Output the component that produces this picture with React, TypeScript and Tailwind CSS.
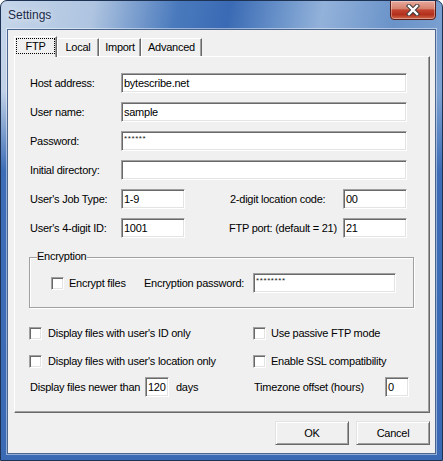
import React from "react";

const sunken =
  "bg-white border border-t-[#a0a0a0] border-l-[#a0a0a0] border-r-white border-b-white shadow-[inset_1px_1px_0_#696969,inset_-1px_-1px_0_#e3e3e3]";

function Field({ className, value = "" }: { className: string; value?: string }) {
  return (
    <div
      className={`${className} h-[20px] shrink-0 ${sunken} pl-[2px] flex items-center overflow-hidden whitespace-nowrap`}
    >
      {value}
    </div>
  );
}

function Stars({ className, count }: { className: string; count: number }) {
  return (
    <div className={`${className} h-[20px] shrink-0 ${sunken} pl-[2px] overflow-hidden whitespace-nowrap`}>
      <span className="block mt-[3px] text-[8px] leading-[8px] tracking-[0.6px] text-[#222]">{"*".repeat(count)}</span>
    </div>
  );
}

function Check() {
  return <div className={`w-[13px] h-[13px] shrink-0 ${sunken}`} />;
}

function Row({ label, children }: { label: string; children: React.ReactNode }) {
  return (
    <div className="flex items-center h-[20px]">
      <span className="w-[91px] shrink-0 whitespace-nowrap">{label}</span>
      {children}
    </div>
  );
}

function Button({ label }: { label: string }) {
  return (
    <div className="w-[74px] h-[24px] flex items-center justify-center bg-[#f0f0f0] border border-t-[#e3e3e3] border-l-[#e3e3e3] border-r-[#696969] border-b-[#696969] shadow-[inset_1px_1px_0_#fff,inset_-1px_-1px_0_#a0a0a0]">
      {label}
    </div>
  );
}

export default function App() {
  return (
    <div className="w-[443px] h-[461px] border border-[#1e3353] rounded-t-[7px] overflow-hidden bg-[linear-gradient(to_bottom,rgba(61,109,182,0)_0px,rgba(61,109,182,0)_90px,#3d6db6_170px,#3a6ab4_100%),linear-gradient(100deg,#c6d6ea_0%,#aec4e0_18%,#4a7abd_34%,#3a6ab4_44%,#6a93ca_54%,#93b2da_62%,#6a93c9_76%,#7fa3d2_88%,#b3c8e4_100%)] font-['Liberation_Sans',Arial,sans-serif] text-[11px] tracking-[-0.25px] text-black">
      <div className="flex h-[28px]">
        <span className="self-center pl-[7px] text-[12px] tracking-normal text-[#1b2a48] [text-shadow:0_0_6px_rgba(255,255,255,0.9)]">
          Settings
        </span>
        <div className="ml-auto mr-[6px] -mt-[1px] w-[46px] h-[20px] rounded-b-[4px] border border-[#5a1c14] bg-[linear-gradient(to_bottom,#e8aa9c_0%,#d7816f_42%,#c24530_50%,#b3301d_75%,#d0674a_100%)] shadow-[inset_0_0_0_1px_rgba(255,255,255,0.35)] flex items-center justify-center">
          <svg width="14" height="12" viewBox="0 0 14 12">
            <path d="M3 2 L11 10 M11 2 L3 10" stroke="#3b3b3b" strokeWidth="4.4" strokeLinecap="square" />
            <path d="M3 2 L11 10 M11 2 L3 10" stroke="#ffffff" strokeWidth="2.4" strokeLinecap="square" />
          </svg>
        </div>
      </div>

      <div className="ml-[6px] w-[429px] h-[425px] border border-[#4a6690] shadow-[0_0_0_1px_rgba(255,255,255,0.45)] bg-[#f0f0f0] pl-[6px] pt-[6px]">
        {/* Tabs */}
        <div className="flex items-end h-[20px]">
          <div className="relative z-10 -mb-[1px] w-[43px] h-[21px] bg-[#f0f0f0] border-l border-t border-r border-l-white border-t-white border-r-[#696969] shadow-[inset_-1px_0_0_#a0a0a0] pt-[1px] pl-[1px] pr-[1px]">
            <div className="h-[16px] border border-dotted border-black flex items-center justify-center">FTP</div>
          </div>
          <div className="w-[42px] h-[18px] border-l border-t border-r border-l-white border-t-white border-r-[#696969] shadow-[inset_-1px_0_0_#a0a0a0] flex items-center justify-center">
            Local
          </div>
          <div className="w-[42px] h-[18px] border-l border-t border-r border-l-white border-t-white border-r-[#696969] shadow-[inset_-1px_0_0_#a0a0a0] flex items-center justify-center">
            Import
          </div>
          <div className="w-[61px] h-[18px] border-l border-t border-r border-l-white border-t-white border-r-[#696969] shadow-[inset_-1px_0_0_#a0a0a0] flex items-center justify-center">
            Advanced
          </div>
        </div>

        {/* Panel */}
        <div className="w-[416px] h-[357px] border border-t-white border-l-white border-r-[#696969] border-b-[#696969] shadow-[inset_-1px_-1px_0_#a0a0a0] pl-[15px] pt-[16px]">
          <div className="flex flex-col gap-[9px]">
            <Row label="Host address:">
              <Field className="w-[286px]" value="bytescribe.net" />
            </Row>
            <Row label="User name:">
              <Field className="w-[286px]" value="sample" />
            </Row>
            <Row label="Password:">
              <Stars className="w-[286px]" count={6} />
            </Row>
            <Row label="Initial directory:">
              <Field className="w-[286px]" />
            </Row>
            <Row label="User's Job Type:">
              <Field className="w-[64px]" value="1-9" />
              <span className="ml-[45px] w-[113px] shrink-0 whitespace-nowrap">2-digit location code:</span>
              <Field className="w-[64px]" value="00" />
            </Row>
            <Row label="User's 4-digit ID:">
              <Field className="w-[64px]" value="1001" />
              <span className="ml-[44px] w-[114px] shrink-0 whitespace-nowrap">FTP port: (default = 21)</span>
              <Field className="w-[64px]" value="21" />
            </Row>
          </div>

          {/* Encryption group */}
          <div className="relative mt-[19px] -ml-[1px] w-[385px] h-[51px] border border-[#a0a0a0] shadow-[1px_1px_0_#fff,inset_1px_1px_0_#fff]">
            <span className="absolute left-[7px] top-[-8px] leading-[13px] bg-[#f0f0f0] pr-[1px]">Encryption</span>
            <div className="flex items-center h-[20px] mt-[15px] ml-[21px]">
              <Check />
              <span className="ml-[5px] w-[75px] shrink-0 whitespace-nowrap">Encrypt files</span>
              <span className="w-[109px] shrink-0 whitespace-nowrap">Encryption password:</span>
              <Stars className="w-[143px]" count={8} />
            </div>
          </div>

          {/* Options */}
          <div className="mt-[15px] -ml-[1px] flex items-center h-[20px]">
            <div className="w-[224px] shrink-0 flex items-center">
              <Check />
              <span className="ml-[6px] whitespace-nowrap">Display files with user's ID only</span>
            </div>
            <div className="flex items-center">
              <Check />
              <span className="ml-[5px] whitespace-nowrap">Use passive FTP mode</span>
            </div>
          </div>
          <div className="mt-[8px] -ml-[1px] flex items-center h-[20px]">
            <div className="w-[224px] shrink-0 flex items-center">
              <Check />
              <span className="ml-[6px] whitespace-nowrap">Display files with user's location only</span>
            </div>
            <div className="flex items-center">
              <Check />
              <span className="ml-[5px] whitespace-nowrap">Enable SSL compatibility</span>
            </div>
          </div>
          <div className="mt-[6px] -ml-[1px] flex items-center h-[20px]">
            <div className="w-[224px] shrink-0 flex items-center pl-[1px]">
              <span className="w-[115px] shrink-0 whitespace-nowrap">Display files newer than</span>
              <Field className="w-[24px]" value="120" />
              <span className="ml-[7px] whitespace-nowrap">days</span>
            </div>
            <div className="flex items-center pl-[1px]">
              <span className="w-[131px] shrink-0 whitespace-nowrap">Timezone offset (hours)</span>
              <Field className="w-[24px]" value="0" />
            </div>
          </div>
        </div>

        {/* Buttons */}
        <div className="w-[416px] mt-[8px] flex justify-end gap-[7px]">
          <Button label="OK" />
          <Button label="Cancel" />
        </div>
      </div>
    </div>
  );
}
